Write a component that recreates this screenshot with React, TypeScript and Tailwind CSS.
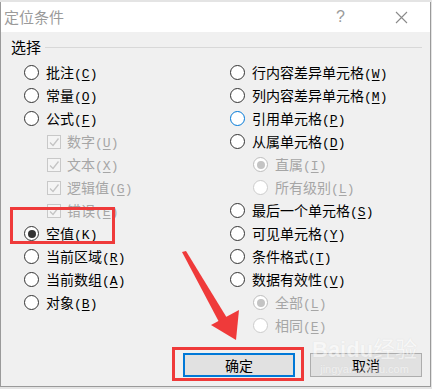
import React from 'react'

type RState = 'normal' | 'focus' | 'checked' | 'dchecked' | 'disabled'

const font = "font-['Noto_Sans_CJK_SC','Noto_Sans',sans-serif]"

function Radio({ state }: { state: RState }) {
  const border =
    state === 'focus'
      ? 'border-[#0078d7]'
      : state === 'dchecked'
        ? 'border-[#bdbdbd]'
        : state === 'disabled'
          ? 'border-[#cccccc]'
          : 'border-[#333333]'
  return (
    <span className={`w-[15px] h-[15px] rounded-full border bg-white flex items-center justify-center shrink-0 ${border}`}>
      {state === 'checked' && <span className="w-[8px] h-[8px] rounded-full bg-[#333333]" />}
      {state === 'dchecked' && <span className="w-[8px] h-[8px] rounded-full bg-[#c4c4c4]" />}
    </span>
  )
}

function Check() {
  return (
    <span className="w-[14px] h-[14px] border border-[#c8c8c8] bg-[#f4f4f4] flex items-center justify-center shrink-0">
      <svg width="12" height="12" viewBox="0 0 12 12">
        <path d="M2 6.5 L5 9.5 L10.5 2.5" fill="none" stroke="#c4c4c4" strokeWidth="1.3" />
      </svg>
    </span>
  )
}

function Label({ text, k, disabled }: { text: string; k: string; disabled?: boolean }) {
  return (
    <span className={`text-[14px] leading-none whitespace-nowrap ${disabled ? 'text-[#a6a6a6]' : 'text-black'}`}>
      {text}
      <span className="font-['Liberation_Mono',monospace] text-[13px]">
        (<span className="underline underline-offset-2">{k}</span>)
      </span>
    </span>
  )
}

type Item = { text: string; k: string; kind: 'radio' | 'check'; state?: RState; indent?: boolean; disabled?: boolean }

const left: Item[] = [
  { text: '批注', k: 'C', kind: 'radio', state: 'normal' },
  { text: '常量', k: 'O', kind: 'radio', state: 'normal' },
  { text: '公式', k: 'F', kind: 'radio', state: 'normal' },
  { text: '数字', k: 'U', kind: 'check', indent: true, disabled: true },
  { text: '文本', k: 'X', kind: 'check', indent: true, disabled: true },
  { text: '逻辑值', k: 'G', kind: 'check', indent: true, disabled: true },
  { text: '错误', k: 'E', kind: 'check', indent: true, disabled: true },
  { text: '空值', k: 'K', kind: 'radio', state: 'checked' },
  { text: '当前区域', k: 'R', kind: 'radio', state: 'normal' },
  { text: '当前数组', k: 'A', kind: 'radio', state: 'normal' },
  { text: '对象', k: 'B', kind: 'radio', state: 'normal' },
]

const right: Item[] = [
  { text: '行内容差异单元格', k: 'W', kind: 'radio', state: 'normal' },
  { text: '列内容差异单元格', k: 'M', kind: 'radio', state: 'normal' },
  { text: '引用单元格', k: 'P', kind: 'radio', state: 'focus' },
  { text: '从属单元格', k: 'D', kind: 'radio', state: 'normal' },
  { text: '直属', k: 'I', kind: 'radio', state: 'dchecked', indent: true, disabled: true },
  { text: '所有级别', k: 'L', kind: 'radio', state: 'disabled', indent: true, disabled: true },
  { text: '最后一个单元格', k: 'S', kind: 'radio', state: 'normal' },
  { text: '可见单元格', k: 'Y', kind: 'radio', state: 'normal' },
  { text: '条件格式', k: 'T', kind: 'radio', state: 'normal' },
  { text: '数据有效性', k: 'V', kind: 'radio', state: 'normal' },
  { text: '全部', k: 'L', kind: 'radio', state: 'dchecked', indent: true, disabled: true },
  { text: '相同', k: 'E', kind: 'radio', state: 'disabled', indent: true, disabled: true },
]

function Row({ item }: { item: Item }) {
  return (
    <div className={`h-[23px] flex items-center ${item.indent ? 'pl-[23px]' : ''} ${item.kind === 'check' ? 'gap-[6px]' : 'gap-[7px]'}`}>
      {item.kind === 'radio' ? <Radio state={item.state!} /> : <Check />}
      <Label text={item.text} k={item.k} disabled={item.disabled} />
    </div>
  )
}

export default function App() {
  return (
    <div className={`w-[432px] h-[389px] bg-[#e4e4e4] pt-[2px] relative overflow-hidden ${font}`}>
      <div className="h-[385px] mr-[1px] border-l border-r border-b border-[#9a9a9a] flex flex-col">
        {/* Title bar */}
        <div className="h-[30px] bg-white flex items-center shrink-0">
          <span className="pl-[3px] text-[15px] text-[#9a9a9a]">定位条件</span>
          <span className="ml-auto mr-[50px] text-[16px] text-[#9a9a9a] font-['Liberation_Sans',sans-serif]">?</span>
          <svg width="13" height="13" viewBox="0 0 13 13" className="mr-[22px]">
            <path d="M1 1 L12 12 M12 1 L1 12" stroke="#8a8a8a" strokeWidth="1.1" />
          </svg>
        </div>

        {/* Body */}
        <div className="flex-1 bg-[#f0f0f0] flex flex-col">
          <div className="h-[29px] flex items-center pl-[10px] pr-[8px] pt-[1px]">
            <span className="text-[15px] text-black">选择</span>
            <span className="flex-1 h-px bg-[#d8d8d8] ml-[4px]" />
          </div>
          <div className="flex pl-[23px]">
            <div className="w-[206px] flex flex-col">
              {left.map((it) => (
                <Row key={it.text} item={it} />
              ))}
            </div>
            <div className="flex flex-col">
              {right.map((it) => (
                <Row key={it.text} item={it} />
              ))}
            </div>
          </div>
          <div className="flex justify-end gap-[15px] pr-[8px] mt-[16px]">
            <button className="w-[112px] h-[24px] bg-[#e1e1e1] border-2 border-[#0078d7] text-[14px] text-black flex items-center justify-center">
              确定
            </button>
            <button className="w-[112px] h-[24px] bg-[#e1e1e1] border border-[#adadad] text-[14px] text-black flex items-center justify-center">
              取消
            </button>
          </div>
        </div>
      </div>

      {/* annotations */}
      <div className="absolute left-[10px] top-[207px] w-[105px] h-[37px] border-[3px] border-[#ef3a3a]" />
      <div className="absolute left-[172px] top-[347px] w-[132px] h-[34px] border-[3px] border-[#ef3a3a]" />
      <svg className="absolute left-0 top-0" width="432" height="389" viewBox="0 0 432 389">
        <polygon points="182,252 186,251 227,318 219,322" fill="#ef3a3a" />
        <polygon points="211,325 239,310 236,340" fill="#ef3a3a" />
      </svg>

      {/* watermark */}
      <div className="absolute left-[312px] top-[336px] flex flex-col items-center opacity-50 pointer-events-none">
        <span className="text-[22px] leading-none font-bold text-white font-['Liberation_Sans',sans-serif] [text-shadow:0_0_1px_#c8c8c8]">
          Baidu<span className="font-['Noto_Sans_CJK_SC',sans-serif] font-normal">经验</span>
        </span>
        <span className="text-[11px] leading-none mt-[3px] text-white font-['Liberation_Sans',sans-serif] [text-shadow:0_0_1px_#cccccc]">
          jingyan.baidu.com
        </span>
      </div>
    </div>
  )
}
